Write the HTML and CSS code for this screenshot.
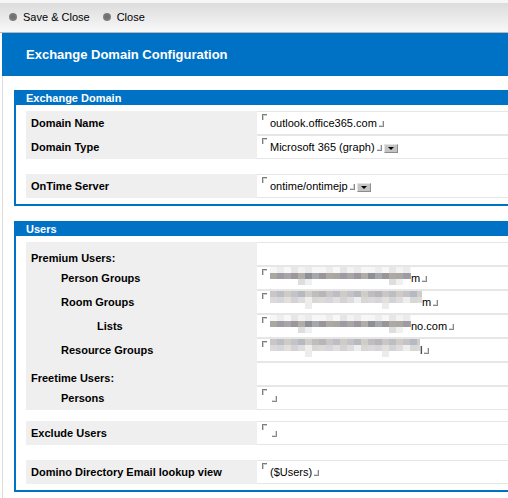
FILE: index.html
```html
<!DOCTYPE html>
<html>
<head>
<meta charset="utf-8">
<title>Exchange Domain Configuration</title>
<link rel="stylesheet" href="styles.css">
</head>
<body>
<div class="toolbar">
  <span class="action"><span class="dot"></span>Save &amp; Close</span>
  <span class="action"><span class="dot"></span>Close</span>
</div>
<div class="main">
  <div class="page-header">Exchange Domain Configuration</div>
  <div class="content">
    <section class="box">
      <div class="box-title">Exchange Domain</div>
      <div class="box-body">
        <div class="group">
          <div class="row">
            <div class="label">Domain Name</div>
            <div class="value"><span class="mk-open"></span>outlook.office365.com<span class="mk-close"></span></div>
          </div>
          <div class="row">
            <div class="label">Domain Type</div>
            <div class="value"><span class="mk-open"></span>Microsoft 365 (graph)<span class="mk-close"></span><span class="drop"></span></div>
          </div>
        </div>
        <div class="group">
          <div class="row">
            <div class="label">OnTime Server</div>
            <div class="value"><span class="mk-open"></span>ontime/ontimejp<span class="mk-close"></span><span class="drop"></span></div>
          </div>
        </div>
      </div>
    </section>

    <section class="box">
      <div class="box-title">Users</div>
      <div class="box-body">
        <div class="group">
          <div class="row">
            <div class="label heading">Premium Users:</div>
            <div class="value"></div>
          </div>
          <div class="row">
            <div class="label indent1">Person Groups</div>
            <div class="value"><span class="mk-open"></span><span class="blur dark w-person"></span>m<span class="mk-close"></span></div>
          </div>
          <div class="row">
            <div class="label indent1">Room Groups</div>
            <div class="value"><span class="mk-open"></span><span class="blur light w-room"></span>m<span class="mk-close"></span></div>
          </div>
          <div class="row">
            <div class="label indent2">Lists</div>
            <div class="value"><span class="mk-open"></span><span class="blur dark w-lists"></span>no.com<span class="mk-close"></span></div>
          </div>
          <div class="row">
            <div class="label indent1">Resource Groups</div>
            <div class="value"><span class="mk-open"></span><span class="blur light w-res"></span>l<span class="mk-close"></span></div>
          </div>
          <div class="row">
            <div class="label heading">Freetime Users:</div>
            <div class="value"></div>
          </div>
          <div class="row">
            <div class="label indent1">Persons</div>
            <div class="value"><span class="mk-open"></span><span class="mk-close"></span></div>
          </div>
        </div>
        <div class="group gap-sm">
          <div class="row">
            <div class="label">Exclude Users</div>
            <div class="value"><span class="mk-open"></span><span class="mk-close"></span></div>
          </div>
        </div>
        <div class="group">
          <div class="row">
            <div class="label">Domino Directory Email lookup view</div>
            <div class="value"><span class="mk-open"></span>($Users)<span class="mk-close"></span></div>
          </div>
        </div>
      </div>
    </section>
  </div>
</div>
</body>
</html>
```
FILE: styles.css
```css
html, body {
  margin: 0;
  padding: 0;
  background: #ffffff;
  overflow: hidden;
}

body {
  font-family: "Liberation Sans", Arial, sans-serif;
  font-size: 11px;
  color: #000000;
}

.toolbar {
  height: 33px;
  border-bottom: 1px solid #b9b9b9;
  background: linear-gradient(#f6f6f6 0, #f6f6f6 3px, #dcdcdc 3px, #f8f8f8 100%);
  display: flex;
  align-items: center;
  padding-left: 9px;
  padding-top: 2px;
  box-sizing: border-box;
}

.action {
  display: inline-flex;
  align-items: center;
  margin-right: 13px;
}

.dot {
  width: 8px;
  height: 8px;
  border-radius: 50%;
  background: radial-gradient(circle at 50% 45%, #6c6c6c 0, #7a7a7a 55%, #a0a0a0 100%);
  margin-right: 6px;
}

.main {
  margin-left: 2px;
}

.page-header {
  height: 43px;
  background: #0072c6;
  color: #ffffff;
  font-weight: bold;
  font-size: 13px;
  display: flex;
  align-items: center;
  padding-left: 24px;
}

.content {
  border-left: 1px solid #dcdcdc;
  padding: 14px 0 0 11px;
  height: 420px;
}

.box {
  border: 2px solid #0072c6;
  border-right: none;
  margin-bottom: 15px;
}

.box-title {
  background: #0072c6;
  color: #ffffff;
  font-weight: bold;
  font-size: 11px;
  height: 13px;
  line-height: 12px;
  padding-left: 10px;
}

.box-body {
  padding: 6px 0 6px 10px;
}

.group + .group {
  margin-top: 15px;
}

.group.gap-sm {
  margin-top: 11px;
}

.row {
  display: grid;
  grid-template-columns: 231px 1fr;
  height: 24px;
}

.label {
  background: #efefef;
  font-weight: bold;
  display: flex;
  align-items: center;
  padding-left: 5px;
}

.label.heading {
  padding-top: 8px;
}

.label.indent1 {
  padding-left: 35px;
}

.label.indent2 {
  padding-left: 71px;
}

.value {
  border-top: 1px solid #e6e6e6;
  border-bottom: 1px solid #e6e6e6;
  padding-left: 5px;
  line-height: 22px;
  white-space: nowrap;
  overflow: hidden;
}

.mk-open {
  display: inline-block;
  width: 4px;
  height: 5px;
  border-top: 1px solid #7c7c7c;
  border-left: 1px solid #7c7c7c;
  box-shadow: inset 1px 1px 0 #cfcfcf;
  margin-right: 3px;
  vertical-align: 7px;
}

.mk-close {
  display: inline-block;
  width: 4px;
  height: 5px;
  border-bottom: 1px solid #8a8690;
  border-right: 1px solid #8a8690;
  box-shadow: inset -1px -1px 0 #d6d6d6;
  margin-left: 2px;
  vertical-align: 0;
}

.drop {
  display: inline-block;
  box-sizing: border-box;
  width: 14px;
  height: 9px;
  margin-left: 2px;
  vertical-align: -2px;
  background: #c4c4c4;
  border-top: 1px solid #e4e4e4;
  border-left: 1px solid #e4e4e4;
  border-right: 1px solid #8c8c8c;
  border-bottom: 1px solid #8c8c8c;
  position: relative;
}

.drop::after {
  content: "";
  position: absolute;
  left: 3px;
  top: 2px;
  border-left: 3px solid transparent;
  border-right: 3px solid transparent;
  border-top: 3px solid #000000;
}

.blur {
  display: inline-block;
  height: 18px;
  vertical-align: -3px;
  background-repeat: no-repeat;
  background-size: 100% 6px;
  background-position: 0 0, 0 6px, 0 12px;
}

.blur.dark {
  background-image:
    repeating-linear-gradient(90deg, #f6f6f6 0 7px, #ededed 7px 14px, #f8f8f8 14px 21px, #e6e6e6 21px 28px, #f3f3f3 28px 35px, #ebebeb 35px 42px, #f7f7f7 42px 49px),
    repeating-linear-gradient(90deg, #aaa6a2 0 7px, #9d9ba3 7px 14px, #a8a6a7 14px 21px, #9a979d 21px 28px, #b0aca8 28px 35px, #8f8f96 35px 42px, #a4a8ae 42px 49px, #9b9597 49px 56px, #acaaa5 56px 63px),
    repeating-linear-gradient(90deg, #ffffff 0 28px, #dedede 28px 35px, #f0f0f0 35px 42px, #ffffff 42px 91px);
}

.blur.light {
  background-image:
    repeating-linear-gradient(90deg, #c9c5c9 0 7px, #bdbdc3 7px 14px, #cfcbc6 14px 21px, #c3c3c8 21px 28px, #b5b9c0 28px 35px, #d0ccc7 35px 42px, #c0bcc0 42px 49px, #b8b6b6 49px 56px),
    repeating-linear-gradient(90deg, #dcdad9 0 7px, #d6d6da 7px 14px, #e2dfdc 14px 21px, #d3d3d6 21px 28px, #dedcdc 28px 35px, #eeeeee 35px 42px, #d8d7d5 42px 49px),
    repeating-linear-gradient(90deg, #ffffff 0 35px, #ececec 35px 42px, #ffffff 42px 77px);
}

.w-person { width: 141px; }
.w-room { width: 152px; }
.w-lists { width: 141px; }
.w-res { width: 150px; }
```
